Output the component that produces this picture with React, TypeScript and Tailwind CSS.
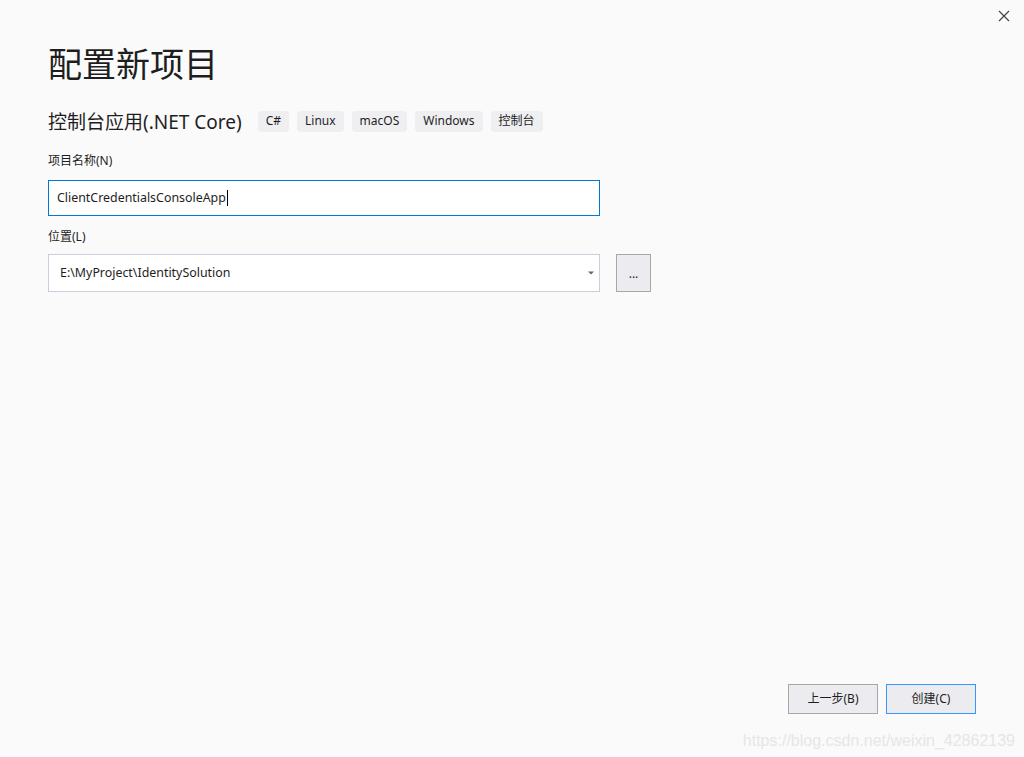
import React from 'react'

const font = { fontFamily: '"Noto Sans", "Noto Sans CJK SC", sans-serif' }

export default function App() {
  const tags = ['C#', 'Linux', 'macOS', 'Windows', '控制台']

  return (
    <div
      className="relative w-[1024px] h-[757px] bg-[#fafafa] text-[#1e1e1e] overflow-hidden flex flex-col"
      style={font}
    >
      {/* Close button */}
      <div className="flex justify-end h-[32px] pr-[16px] pt-[10px]">
        <svg width="12" height="12" viewBox="0 0 12 12" className="mr-[-2px]">
          <path d="M1 1 L11 11 M11 1 L1 11" stroke="#444" strokeWidth="1.2" />
        </svg>
      </div>

      <div className="flex flex-col px-[48px]">
        {/* Title */}
        <h1 className="text-[34px] leading-[40px] h-[40px] mt-[12px] font-normal text-[#1e1e1e]">
          配置新项目
        </h1>

        {/* Subtitle and tags */}
        <div className="flex items-center mt-[24px] h-[28px]">
          <span className="text-[19px] leading-[28px] mr-[16px]">控制台应用(.NET Core)</span>
          <div className="flex gap-[8px] mb-[2px]">
            {tags.map((tag) => (
              <span
                key={tag}
                className="h-[21px] px-[8px] flex items-center rounded-[4px] bg-[#efeff2] text-[12px] text-[#1e1e1e]"
              >
                {tag}
              </span>
            ))}
          </div>
        </div>

        {/* Project name */}
        <label className="mt-[17px] text-[12px] leading-[16px] h-[16px]">项目名称(N)</label>
        <div className="mt-[11px] w-[552px] h-[36px] border border-[#0078d7] bg-white flex items-center pl-[8px] text-[12.4px]">
          <span>ClientCredentialsConsoleApp</span>
          <span className="w-px h-[16px] bg-black ml-[1px]" />
        </div>

        {/* Location */}
        <label className="mt-[13px] text-[12px] leading-[16px] h-[16px]">位置(L)</label>
        <div className="mt-[9px] flex items-center gap-[16px]">
          <div className="w-[552px] h-[38px] border border-[#cccedb] bg-white flex items-center justify-between pl-[11px] pr-[3px] text-[12.4px]">
            <span>E:\MyProject\IdentitySolution</span>
            <svg width="10" height="6" viewBox="0 0 10 6">
              <path d="M2 1.5 L8 1.5 L5 4.5 Z" fill="#666" />
            </svg>
          </div>
          <div className="w-[35px] h-[38px] border border-[#a8a8a8] bg-[#ececf0] flex items-center justify-center text-[12px] leading-none pt-[2px]">
            ...
          </div>
        </div>
      </div>

      {/* Footer buttons */}
      <div className="mt-auto mb-[43px] flex justify-end gap-[8px] pr-[48px]">
        <button className="w-[90px] h-[30px] border border-[#a8a8a8] bg-[#ececf0] text-[12px] text-[#1e1e1e]">
          上一步(B)
        </button>
        <button className="w-[90px] h-[30px] border border-[#3399ff] bg-[#ececf0] text-[12px] text-[#1e1e1e]">
          创建(C)
        </button>
      </div>

      {/* Watermark */}
      <div
        className="absolute right-[9px] bottom-[4px] text-[16px] text-[#e6e6e6]"
        style={{ fontFamily: '"Liberation Sans", Arial, sans-serif' }}
      >
        https://blog.csdn.net/weixin_42862139
      </div>
    </div>
  )
}
